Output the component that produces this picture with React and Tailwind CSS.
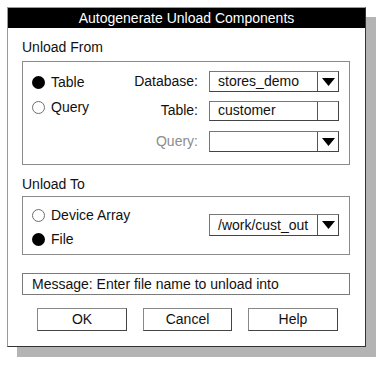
import React from 'react';

const Radio = ({ checked, label }) => (
  <div className="flex items-center gap-[6px] h-[16px]">
    <span
      className={`shrink-0 w-[13px] h-[13px] rounded-full ${checked ? 'bg-black' : 'border border-[#6e6e6e] bg-white'}`}
    />
    <span className="text-[14px] leading-[16px] text-[#111]">{label}</span>
  </div>
);

const Arrow = () => (
  <svg width="13" height="8" viewBox="0 0 13 8">
    <polygon points="0,0 13,0 6.5,8" fill="#000" />
  </svg>
);

const Field = ({ value, arrow = true, h = 'h-[21px]' }) => (
  <div className={`w-[130px] ${h} flex border border-t-[#777] border-l-[#777] border-r-[#444] border-b-[#444] bg-white`}>
    <div className="flex-1 flex items-center pl-[8px] text-[14px] text-[#111] truncate">{value}</div>
    <div className="w-[21px] border-l border-[#555] flex items-center justify-center">
      {arrow && <Arrow />}
    </div>
  </div>
);

const Button = ({ children, w }) => (
  <button className={`${w} h-[23px] border border-t-[#888] border-l-[#888] border-r-[#444] border-b-[#444] bg-white text-[14px] text-[#111] flex items-center justify-center`}>
    {children}
  </button>
);

export default function App() {
  return (
    <div className="w-[384px] h-[365px] bg-white pt-[7px] pl-[7px] font-['Liberation_Sans',Arial,sans-serif]">
      <div className="w-[359px] h-[340px] bg-white border border-t-[#9a9a9a] border-l-[#9a9a9a] border-r-[#333] border-b-[#333] shadow-[10px_10px_0_#b4b4b4]">
        <div className="h-[20px] bg-black text-white text-[14px] flex items-center justify-center">
          Autogenerate Unload Components
        </div>

        <div className="px-[14px]">
          <div className="mt-[11px] text-[14px] leading-[16px] text-[#111]">Unload From</div>
          <div className="mt-[6px] w-[328px] h-[104px] border border-[#8a8a8a] flex justify-between pt-[9px] pl-[9px] pr-[10px]">
            <div className="flex flex-col gap-[9px] pt-[3px]">
              <Radio checked label="Table" />
              <Radio label="Query" />
            </div>
            <div className="grid grid-cols-[auto_130px] content-start gap-x-[11px] items-center text-[14px]">
              <span className="text-right text-[#111]">Database:</span>
              <Field value="stores_demo" />
              <span className="text-right text-[#111] mt-[8px]">Table:</span>
              <div className="mt-[8px]"><Field value="customer" arrow={false} h="h-[20px]" /></div>
              <span className="text-right text-[#8c8c8c] mt-[10px]">Query:</span>
              <div className="mt-[10px]"><Field value="" /></div>
            </div>
          </div>

          <div className="mt-[11px] text-[14px] leading-[16px] text-[#111]">Unload To</div>
          <div className="mt-[4px] w-[328px] h-[59px] border border-[#8a8a8a] flex justify-between pl-[9px] pr-[10px]">
            <div className="flex flex-col gap-[8px] pt-[10px]">
              <Radio label="Device Array" />
              <Radio checked label="File" />
            </div>
            <div className="pt-[17px]">
              <Field value="/work/cust_out" h="h-[22px]" />
            </div>
          </div>

          <div className="mt-[18px] w-[328px] h-[22px] border border-[#7a7a7a] flex items-center pl-[9px] text-[14px] text-[#111]">
            Message: Enter file name to unload into
          </div>

          <div className="mt-[13px] flex gap-[16px] pl-[15px]">
            <Button w="w-[90px]">OK</Button>
            <Button w="w-[89px]">Cancel</Button>
            <Button w="w-[90px]">Help</Button>
          </div>
        </div>
      </div>
    </div>
  );
}
